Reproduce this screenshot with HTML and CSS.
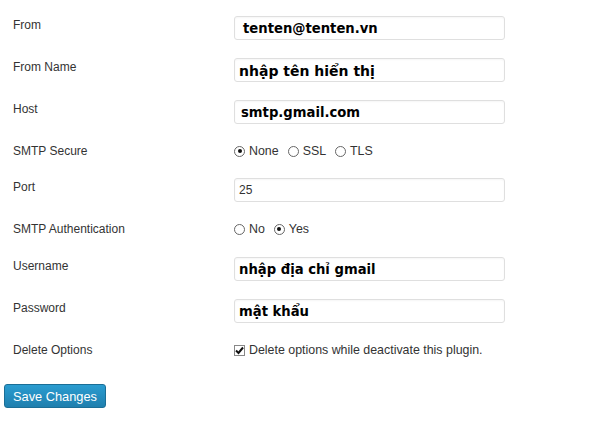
FILE: index.html
```html
<!DOCTYPE html>
<html>
<head>
<meta charset="utf-8">
<link rel="stylesheet" href="styles.css">
</head>
<body>
<form class="form">
  <div class="row row-text">
    <div class="label">From</div>
    <div class="field"><div class="input big pad8">tenten@tenten.vn</div></div>
  </div>
  <div class="row row-text">
    <div class="label">From Name</div>
    <div class="field"><div class="input big wide">nhập tên hiển thị</div></div>
  </div>
  <div class="row row-text">
    <div class="label">Host</div>
    <div class="field"><div class="input big pad6">smtp.gmail.com</div></div>
  </div>
  <div class="row row-radio">
    <div class="label">SMTP Secure</div>
    <div class="field radios">
      <span class="opt"><span class="radio on"></span>None</span>
      <span class="opt"><span class="radio"></span>SSL</span>
      <span class="opt"><span class="radio"></span>TLS</span>
    </div>
  </div>
  <div class="row row-text">
    <div class="label">Port</div>
    <div class="field"><div class="input small">25</div></div>
  </div>
  <div class="row row-radio row-auth">
    <div class="label">SMTP Authentication</div>
    <div class="field radios">
      <span class="opt"><span class="radio"></span>No</span>
      <span class="opt"><span class="radio on"></span>Yes</span>
    </div>
  </div>
  <div class="row row-text">
    <div class="label">Username</div>
    <div class="field"><div class="input big">nhập địa chỉ gmail</div></div>
  </div>
  <div class="row row-text">
    <div class="label">Password</div>
    <div class="field"><div class="input big">mật khẩu</div></div>
  </div>
  <div class="row row-radio row-del">
    <div class="label">Delete Options</div>
    <div class="field radios">
      <span class="opt"><span class="check"><svg width="9" height="9" viewBox="0 0 9 9"><path d="M1 4.5 L3.5 7 L8 1.5" fill="none" stroke="#111" stroke-width="2"/></svg></span>Delete options while deactivate this plugin.</span>
    </div>
  </div>
  <div class="actions">
    <span class="button">Save Changes</span>
  </div>
</form>
</body>
</html>
```
FILE: styles.css
```css
html, body {
  margin: 0;
  padding: 0;
  background: #fff;
}
body {
  font-family: "Liberation Sans", Arial, sans-serif;
  font-size: 12px;
  color: #333;
}
.form {
  padding-top: 16px;
  width: 607px;
}
.row {
  display: flex;
  align-items: flex-start;
}
.label {
  width: 221px;
  padding-left: 13px;
  line-height: 14px;
  color: #333;
}
.row-text {
  height: 42px;
}
.row-text .label {
  padding-top: 2px;
}
.row-radio {
  height: 36px;
}
.row-radio .label {
  padding-top: 2px;
}
.row-auth {
  height: 37px;
}
.row-del {
  height: 43px;
}
.input {
  box-sizing: border-box;
  width: 271px;
  height: 24px;
  border: 1px solid #dfdfdf;
  border-radius: 3px;
  box-shadow: inset 0 1px 2px rgba(0,0,0,0.04);
  background: #fff;
  padding-left: 6px;
  color: #000;
  display: flex;
  align-items: center;
}
.input.big {
  font-family: "DejaVu Sans", Tahoma, sans-serif;
  font-weight: bold;
  font-size: 13.2px;
  padding-left: 4px;
  padding-top: 1px;
}
.input.big.pad8 {
  padding-left: 8px;
}
.input.big.pad6 {
  padding-left: 6px;
}
.input.big.wide {
  font-size: 14px;
}
.input.small {
  font-size: 12px;
  color: #333;
  padding-left: 4px;
}
.radios {
  display: flex;
  align-items: center;
  height: 18px;
  gap: 9px;
}
.opt {
  display: inline-flex;
  align-items: center;
  gap: 4px;
  color: #333;
  font-size: 12.4px;
}
.radio {
  box-sizing: border-box;
  width: 11px;
  height: 11px;
  border: 1px solid #666;
  border-radius: 50%;
  background: #fff;
  position: relative;
  display: inline-block;
}
.radio.on::after {
  content: "";
  position: absolute;
  left: 2.5px;
  top: 2.5px;
  width: 4px;
  height: 4px;
  border-radius: 50%;
  background: #111;
}
.check {
  box-sizing: border-box;
  width: 11px;
  height: 11px;
  border: 1px solid #888;
  background: #fff;
  display: inline-flex;
  align-items: center;
  justify-content: center;
}
.actions {
  padding-left: 4px;
}
.button {
  display: inline-flex;
  align-items: center;
  justify-content: center;
  box-sizing: border-box;
  width: 102px;
  height: 24px;
  border: 1px solid #1b6e96;
  border-radius: 3px;
  background: linear-gradient(#2a9cd0, #1f7fae);
  color: #fff;
  font-size: 12.8px;
}
```
